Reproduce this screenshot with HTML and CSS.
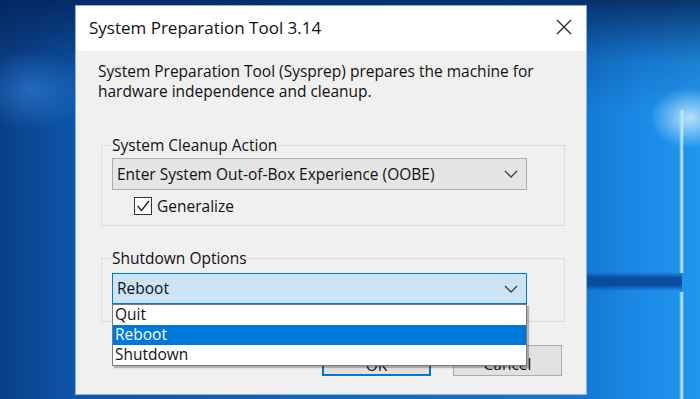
FILE: index.html
```html
<!DOCTYPE html>
<html>
<head>
<meta charset="utf-8">
<link rel="stylesheet" href="styles.css">
</head>
<body>
<div class="desktop">
  <div class="dialog">
    <div class="titlebar">
      <span class="title">System Preparation Tool 3.14</span>
      <svg class="close" width="16" height="16" viewBox="0 0 16 16"><path d="M1 1L15 15M15 1L1 15" stroke="#2b2b2b" stroke-width="1.4" fill="none"/></svg>
    </div>
    <div class="content">
      <p class="desc">System Preparation Tool (Sysprep) prepares the machine for<br>hardware independence and cleanup.</p>
      <fieldset class="group g1">
        <legend>System Cleanup Action</legend>
        <div class="combo">
          <span class="combo-text">Enter System Out-of-Box Experience (OOBE)</span>
          <svg class="chev" width="14" height="8" viewBox="0 0 14 8"><path d="M1 1L7 7L13 1" stroke="#444" stroke-width="1.4" fill="none"/></svg>
        </div>
        <div class="check">
          <span class="box"><svg width="16" height="16" viewBox="0 0 16 16"><path d="M2.5 8L6.5 12.5L14 3" stroke="#222" stroke-width="1.4" fill="none"/></svg></span>
          <span class="check-label">Generalize</span>
        </div>
      </fieldset>
      <fieldset class="group g2">
        <legend>Shutdown Options</legend>
        <div class="combo-wrap">
          <div class="combo open">
            <span class="combo-text">Reboot</span>
            <svg class="chev" width="14" height="8" viewBox="0 0 14 8"><path d="M1 1L7 7L13 1" stroke="#444" stroke-width="1.4" fill="none"/></svg>
          </div>
          <ul class="list">
            <li>Quit</li>
            <li class="sel">Reboot</li>
            <li>Shutdown</li>
          </ul>
        </div>
      </fieldset>
      <div class="buttons">
        <button class="btn default">OK</button>
        <button class="btn">Cancel</button>
      </div>
    </div>
  </div>
</div>
</body>
</html>
```
FILE: styles.css
```css
html, body {
  margin: 0;
  padding: 0;
}
body {
  width: 700px;
  height: 399px;
  overflow: hidden;
  font-family: "Open Sans", "Noto Sans", sans-serif;
}
.desktop {
  position: relative;
  width: 700px;
  height: 399px;
  background:
    linear-gradient(to right, rgba(120,210,255,0) 0, rgba(160,225,255,0.9) 2px, rgba(200,240,255,1) 3px, rgba(120,210,255,0) 5px) 679px 110px / 6px 163px no-repeat,
    linear-gradient(to right, rgba(120,210,255,0) 0, rgba(160,225,255,0.9) 2px, rgba(200,240,255,1) 3px, rgba(120,210,255,0) 5px) 679px 292px / 6px 107px no-repeat,
    linear-gradient(to bottom, rgba(8,70,150,0) 0, rgba(8,70,150,0.9) 6px, rgba(8,70,150,0.9) 13px, rgba(8,70,150,0) 19px) 587px 272px / 95px 20px no-repeat,
    radial-gradient(ellipse 40px 30px at 690px 118px, rgba(220,245,255,0.8), rgba(220,245,255,0) 100%),
    radial-gradient(ellipse 60px 40px at 30px 90px, rgba(60,140,230,0.5), rgba(60,140,230,0) 100%),
    linear-gradient(to bottom, rgba(5,35,90,0.85) 0, rgba(5,35,90,0.2) 60px, rgba(5,35,90,0) 110px),
    linear-gradient(to right, #0a3f86 0, #0d55aa 75px, #1379d4 587px, #1a8ae6 640px, #2196ee 700px);
}
.dialog {
  position: absolute;
  left: 75px;
  top: 5px;
  width: 512px;
  height: 390px;
  box-sizing: border-box;
  border: 1px solid #8ab4dc;
  background: #f0f0f0;
  display: flex;
  flex-direction: column;
}
.titlebar {
  height: 45px;
  flex: none;
  background: #ffffff;
  display: flex;
  align-items: center;
  justify-content: space-between;
  padding: 0 14px 0 13px;
}
.title {
  font-size: 17px;
  color: #111;
  margin-top: -2px;
}
.close {
  display: block;
  margin-top: -4px;
}
.content {
  flex: 1;
  display: flex;
  flex-direction: column;
  color: #111;
  font-size: 15.5px;
}
.desc {
  margin: 10px 0 0 22px;
  line-height: 20px;
}
.group {
  margin: 35px 0 0 25px;
  width: 464px;
  box-sizing: border-box;
  border: 1px solid #dcdcdc;
  padding: 0 10px 10px 10px;
  min-width: 0;
}
.group legend {
  padding: 0 1px;
  margin-left: -1px;
  line-height: 18px;
  font-size: 15.5px;
}
.combo {
  width: 415px;
  height: 32px;
  box-sizing: border-box;
  border: 1px solid #adadad;
  background: #e5e5e5;
  display: flex;
  align-items: center;
  justify-content: space-between;
  padding: 0 8px 0 4px;
  margin-top: 4px;
}
.combo-text {
  margin-top: -1px;
}
.chev {
  display: block;
}
.check {
  display: flex;
  align-items: center;
  margin: 7px 0 0 22px;
  height: 18px;
}
.box {
  width: 18px;
  height: 18px;
  box-sizing: border-box;
  border: 1px solid #333;
  background: #fff;
  display: flex;
  align-items: center;
  justify-content: center;
}
.box svg {
  display: block;
}
.check-label {
  margin-left: 5px;
}
.g2 {
  margin-top: 23px;
  padding-bottom: 17px;
}
.combo-wrap {
  position: relative;
  margin-top: 6px;
}
.combo.open {
  margin-top: 0;
  height: 31px;
  background: #cce4f7;
  border-color: #0078d7;
}
.list {
  position: absolute;
  left: 0;
  top: 100%;
  width: 415px;
  box-sizing: border-box;
  margin: 0;
  padding: 0;
  list-style: none;
  background: #fff;
  border: 1px solid #7a7a7a;
  box-shadow: 2px 2px 1px rgba(0,0,0,0.25);
  z-index: 2;
}
.list li {
  height: 20px;
  line-height: 19px;
  padding-left: 2px;
}
.list li.sel {
  background: #0078d7;
  color: #fff;
}
.buttons {
  display: flex;
  justify-content: flex-end;
  gap: 22px;
  margin: 23px 24px 0 0;
}
.btn {
  width: 109px;
  height: 31px;
  box-sizing: border-box;
  border: 1px solid #adadad;
  background: #e1e1e1;
  font-family: "Open Sans", "Noto Sans", sans-serif;
  font-size: 15.5px;
  color: #111;
  padding: 7px 0 0 0;
}
.btn.default {
  border: 2px solid #0078d7;
}
```
